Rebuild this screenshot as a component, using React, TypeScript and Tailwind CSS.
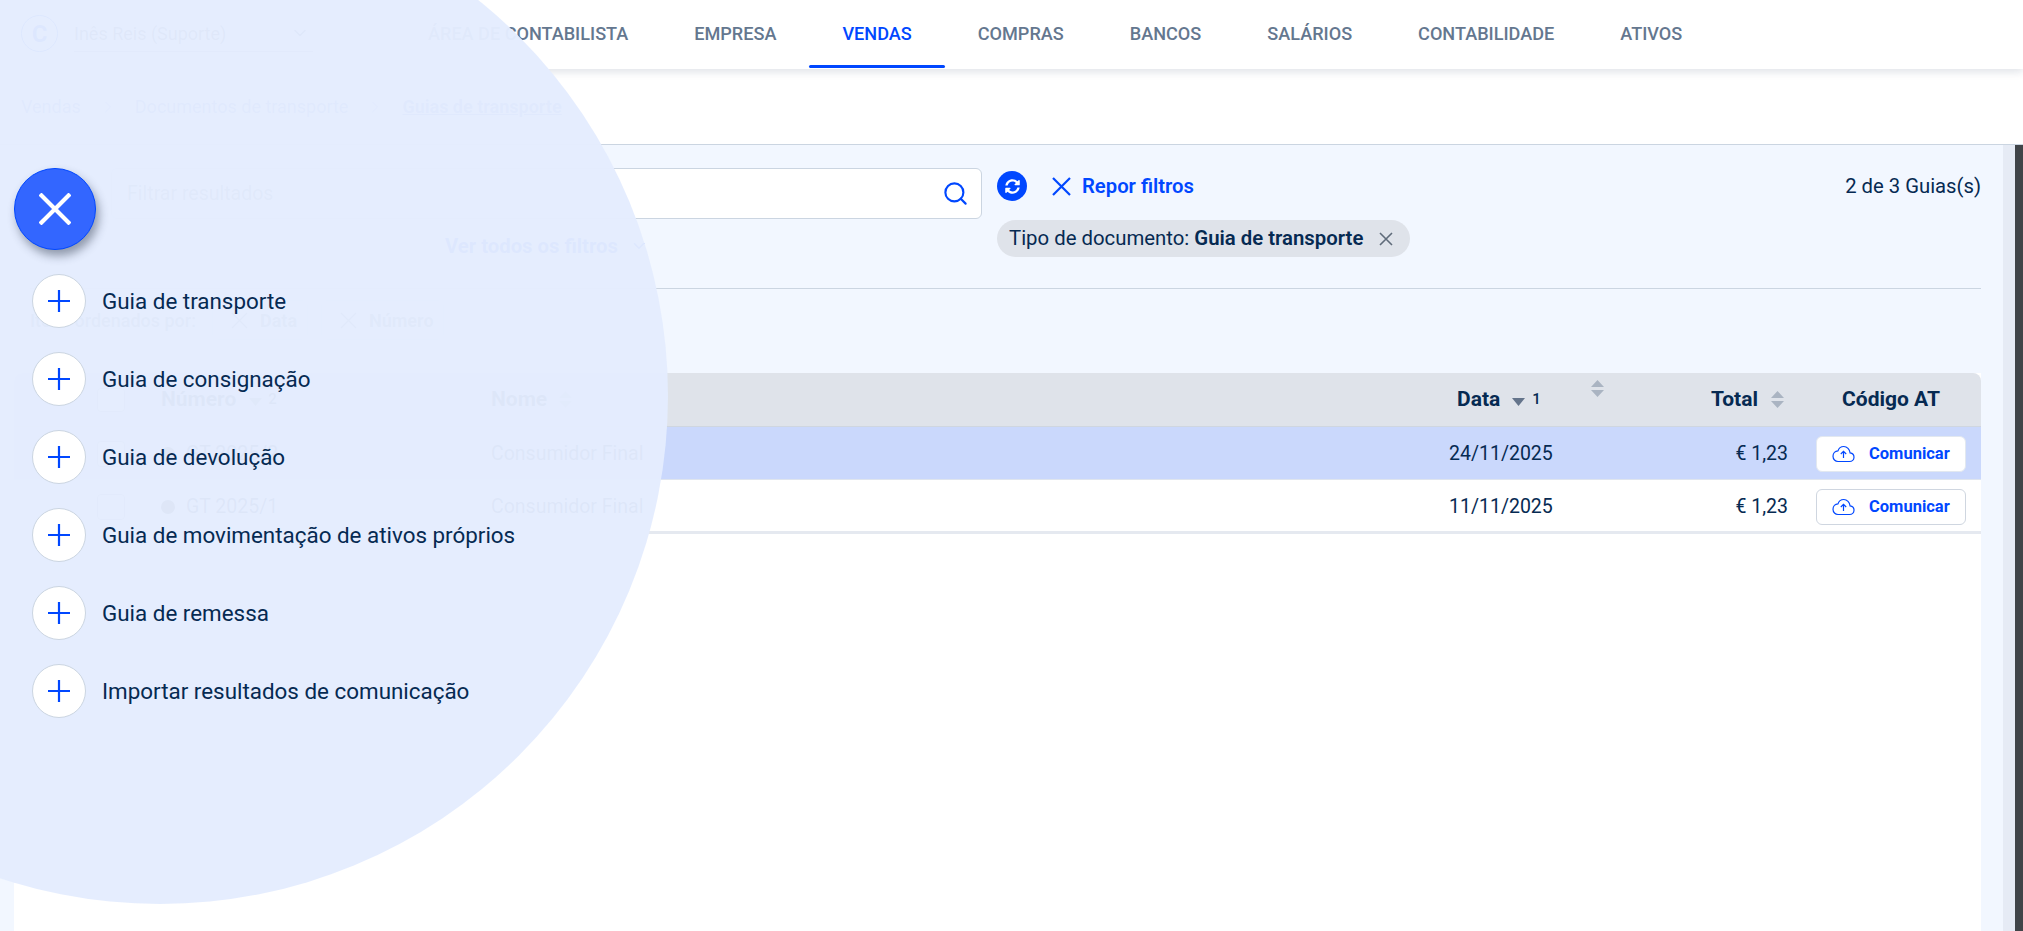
import React from "react";
import { ChevronDown, ChevronRight, Search } from "lucide-react";
import { FaSyncAlt } from "react-icons/fa";

const navItems = ["ÁREA DE CONTABILISTA", "EMPRESA", "VENDAS", "COMPRAS", "BANCOS", "SALÁRIOS", "CONTABILIDADE", "ATIVOS"];

const actions = [
  "Guia de transporte",
  "Guia de consignação",
  "Guia de devolução",
  "Guia de movimentação de ativos próprios",
  "Guia de remessa",
  "Importar resultados de comunicação",
];

const rows = [
  { id: "GT 2025/2", date: "24/11/2025", selected: true },
  { id: "GT 2025/1", date: "11/11/2025", selected: false },
];

function Cross({ size, stroke, className }: { size: number; stroke: number; className?: string }) {
  return (
    <svg width={size} height={size} viewBox={`0 0 ${size} ${size}`} fill="none" stroke="currentColor" strokeWidth={stroke} className={className}>
      <path d={`M1 1L${size - 1} ${size - 1}M${size - 1} 1L1 ${size - 1}`} />
    </svg>
  );
}

function SortBoth() {
  return (
    <svg width="13" height="17" viewBox="0 0 13 17" className="text-[#aab4c2] shrink-0">
      <path d="M6.5 0L13 7H0z M0 10h13l-6.500 7z" fill="currentColor" />
    </svg>
  );
}

function SortDown() {
  return (
    <svg width="13" height="8" viewBox="0 0 13 8" className="text-[#64748b] shrink-0">
      <path d="M0 0h13L6.500 8z" fill="currentColor" />
    </svg>
  );
}

function CloudIcon() {
  return (
    <svg width="23" height="20" viewBox="0 0 23 20" fill="none" stroke="currentColor" strokeWidth="1.2" className="shrink-0">
      <path d="M6 17.500h11.500c2.500 0 4.500-1.900 4.500-4.300 0-2.300-1.700-4-3.900-4.300C17.800 5.500 15 2.500 11.800 2.500 9 2.500 6.700 4.300 6 6.800 3.200 7 1 9.300 1 12.200c0 3 2.300 5.300 5 5.300z" />
      <path d="M11.500 14V7.500M8.800 10l2.700-2.700 2.700 2.700" />
    </svg>
  );
}

function SortChip({ label, width }: { label: string; width: string }) {
  return (
    <div className={`flex items-center gap-[12px] h-[40px] pl-[18px] rounded-[6px] border border-[#e2e8f0] bg-white ${width}`}>
      <Cross size={17} stroke={1.4} className="text-[#64748b]" />
      <span className="text-[18px] font-bold text-[#64748b]">{label}</span>
    </div>
  );
}

export default function App() {
  return (
    <div className="relative h-[931px] w-full overflow-hidden flex flex-col bg-white text-[#062a52] font-['Roboto',sans-serif]">
      {/* top bar */}
      <header className="relative z-10 h-[69px] shrink-0 flex bg-white shadow-[0_3px_8px_rgba(15,40,80,0.13)]">
        <div className="w-[395px] shrink-0 flex items-start pl-[21px] pt-[15px]">
          <div className="w-[37px] h-[37px] rounded-full border border-[#0047ff] flex items-center justify-center text-[#0047ff] text-[24px] font-bold">
            C
          </div>
          <div className="ml-[16px] w-[239px] h-[37px] flex items-center justify-between border-b border-[#94a3b8] pr-[3px]">
            <span className="text-[18px] text-[#475569]">Inês Reis (Suporte)</span>
            <ChevronDown size={20} className="text-[#475569]" />
          </div>
        </div>
        <nav className="flex">
          {navItems.map((item) => (
            <a
              key={item}
              className={
                item === "VENDAS"
                  ? "relative px-[33px] pb-[2px] flex items-center text-[18.1px] font-medium text-[#0047ff] after:absolute after:left-0 after:right-0 after:bottom-[1px] after:h-[3px] after:bg-[#0047ff] after:rounded-sm"
                  : "px-[33px] pb-[2px] flex items-center text-[18.1px] font-medium text-[#64778f]"
              }
            >
              {item}
            </a>
          ))}
        </nav>
      </header>

      {/* breadcrumb */}
      <div className="h-[76px] shrink-0 pl-[21px] flex items-center text-[18px] text-[#5b7fd6] border-b border-[#cbd5e1]">
        <span>Vendas</span>
        <ChevronRight size={20} strokeWidth={1.2} className="mx-[17px]" />
        <span>Documentos de transporte</span>
        <ChevronRight size={20} strokeWidth={1.2} className="mx-[17px]" />
        <span className="font-bold underline">Guias de transporte</span>
      </div>

      <div className="flex-1 flex min-h-0">
        <main className="flex-1 min-w-0 flex flex-col bg-[#f2f7ff] pl-[14px] pr-[22px]">
          {/* filters */}
          <div className="h-[144px] shrink-0 ml-[16px] border-b border-[#cbd5e1] pt-[23px] pl-[81px] flex items-start">
            <div className="w-[871px] shrink-0 flex flex-col items-center">
              <div className="w-full h-[51px] flex items-center justify-between bg-white border border-[#cbd5e1] rounded-[6px] pl-[15px] pr-[12px]">
                <span className="text-[19.5px] text-[#64748b]">Filtrar resultados</span>
                <Search size={27} strokeWidth={1.9} className="text-[#0047ff]" />
              </div>
              <div className="mt-[12px] flex items-center gap-[12px] text-[#0047ff]">
                <span className="text-[20.25px] font-bold">Ver todos os filtros</span>
                <ChevronDown size={18} />
              </div>
            </div>
            <div className="ml-[15px] flex flex-col">
              <div className="h-[30px] mt-[3px] flex items-center">
                <div className="w-[30px] h-[30px] rounded-full bg-[#0047ff] flex items-center justify-center text-white">
                  <FaSyncAlt size={15} />
                </div>
                <Cross size={19} stroke={2.2} className="ml-[25px] text-[#0047ff]" />
                <span className="ml-[11px] text-[20.25px] font-semibold text-[#0047ff]">Repor filtros</span>
              </div>
              <div className="mt-[19px] h-[37px] flex items-center gap-[16px] rounded-full bg-[#dfe3ea] pl-[12px] pr-[17px] text-[20.35px] whitespace-nowrap">
                <span>
                  Tipo de documento: <span className="font-semibold">Guia de transporte</span>
                </span>
                <Cross size={14} stroke={1.6} className="text-[#5f6b7a]" />
              </div>
            </div>
            <span className="ml-auto mt-[3px] text-[20.25px] whitespace-nowrap">2 de 3 Guias(s)</span>
          </div>

          {/* sort summary */}
          <div className="h-[84px] shrink-0 ml-[16px] pt-[11px] flex items-start text-[#64748b]">
            <span className="h-[40px] w-[182px] flex items-center text-[18px] font-medium">Itens ordenados por:</span>
            <SortChip label="Data" width="w-[96px]" />
            <div className="ml-[13px]">
              <SortChip label="Número" width="w-[123px]" />
            </div>
          </div>

          {/* table */}
          <div className="flex-1 bg-white">
            <div className="h-[54px] flex items-center bg-[#dfe3ea] rounded-t-[8px] border-b border-[#cfd6e0] text-[21px] font-bold">
              <div className="w-[147px] shrink-0 flex justify-end pr-[36px]">
                <div className="w-[28px] h-[24px] rounded-[4px] border border-[#94a3b8] bg-white" />
              </div>
              <div className="w-[330px] shrink-0 flex items-center">
                <span>Número</span>
                <span className="ml-[13px] pt-[5px]">
                  <SortDown />
                </span>
                <span className="ml-[6px] text-[15px] font-medium">2</span>
              </div>
              <div className="flex-1 flex items-center">
                <span>Nome</span>
                <span className="ml-[12px]">
                  <SortBoth />
                </span>
              </div>
              <div className="w-[170px] shrink-0 pl-[8px] flex items-center">
                <span>Data</span>
                <span className="ml-[12px] pt-[5px]">
                  <SortDown />
                </span>
                <span className="ml-[7px] text-[15px] font-medium">1</span>
                <span className="ml-[50px] -mt-[23px]">
                  <SortBoth />
                </span>
              </div>
              <div className="w-[169px] shrink-0 flex items-center justify-end gap-[13px] pr-[4px]">
                <span>Total</span>
                <SortBoth />
              </div>
              <div className="w-[193px] shrink-0 pl-[28px] pr-[15px]">
                <div className="text-center">Código AT</div>
              </div>
            </div>
            {rows.map((row) => (
              <div
                key={row.id}
                className={
                  row.selected
                    ? "h-[53px] pt-[1px] flex items-center bg-[#cad8fc] border-b border-[#dfe5ee] text-[19.5px]"
                    : "h-[54px] pt-[2px] flex items-center border-b-[3px] border-[#e5e9f0] text-[19.5px]"
                }
              >
                <div className="w-[147px] shrink-0 flex justify-end pr-[36px]">
                  <div className="w-[28px] h-[26px] rounded-[4px] border border-[#94a3b8] bg-white" />
                </div>
                <div className="w-[330px] shrink-0 flex items-center gap-[11px]">
                  <span className="w-[14px] h-[14px] rounded-full bg-[#1f2937]" />
                  <span>{row.id}</span>
                </div>
                <div className="flex-1">Consumidor Final</div>
                <div className="w-[170px] shrink-0">{row.date}</div>
                <div className="w-[169px] shrink-0 text-right">€ 1,23</div>
                <div className="w-[193px] shrink-0 flex justify-end pr-[15px]">
                  <button
                    className={
                      row.selected
                        ? "w-[150px] h-[36px] flex items-center pl-[15px] gap-[14px] bg-white rounded-[6px] border border-[#e2e8f0] text-[#0047ff]"
                        : "w-[150px] h-[36px] flex items-center pl-[15px] gap-[14px] bg-white rounded-[6px] border border-[#cfd6e0] text-[#0047ff]"
                    }
                  >
                    <CloudIcon />
                    <span className="pt-[2px] text-[16.5px] font-bold">Comunicar</span>
                  </button>
                </div>
              </div>
            ))}
          </div>
        </main>
        <div className="w-[12px] shrink-0 bg-[#e6ebf5]" />
        <div className="w-[8px] shrink-0 bg-[#404448]" />
      </div>

      {/* expanded action menu, laid over the page */}
      <div className="absolute z-20 left-[-348px] top-[-112px] w-[1016px] h-[1016px] rounded-full bg-[#e4ecfe]/[0.97]" />
      <div className="absolute z-30 left-[14px] top-[168px] flex flex-col items-start">
        <button className="w-[82px] h-[82px] rounded-full bg-[#3366ff] border border-[#0047ff] flex items-center justify-center text-white shadow-[3px_6px_10px_rgba(40,50,70,0.45)]">
          <Cross size={32} stroke={4.2} />
        </button>
        <ul className="mt-[24px] ml-[18px] flex flex-col gap-[24px]">
          {actions.map((label) => (
            <li key={label} className="flex items-center gap-[16px]">
              <span className="w-[54px] h-[54px] rounded-full bg-white border border-[#cbd5e1] flex items-center justify-center text-[#0047ff]">
                <svg width="22" height="22" viewBox="0 0 22 22" fill="none" stroke="currentColor" strokeWidth="2.2">
                  <path d="M11 0v22M0 11h22" />
                </svg>
              </span>
              <span className="pt-[2px] text-[22.4px] whitespace-nowrap">{label}</span>
            </li>
          ))}
        </ul>
      </div>
    </div>
  );
}
